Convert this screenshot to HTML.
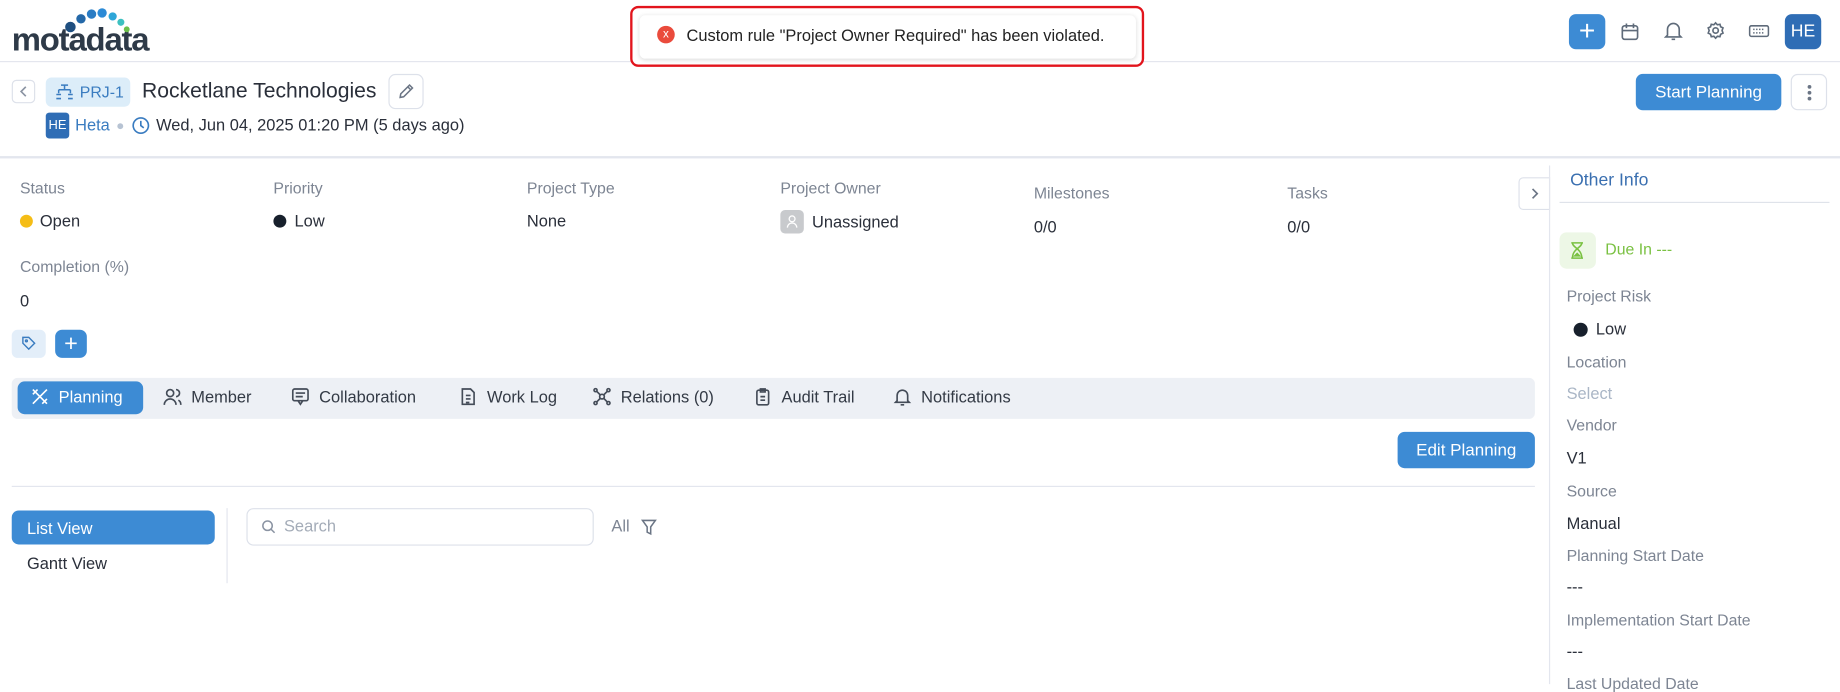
<!DOCTYPE html>
<html><head><meta charset="utf-8"><style>
*{box-sizing:border-box;margin:0;padding:0}
html,body{width:1840px;height:684px;overflow:hidden;background:#fff}
#w{position:absolute;left:0;top:0;width:1568px;height:583px;transform:scale(1.173469);transform-origin:0 0;font-family:"Liberation Sans",sans-serif;color:#2a2f3a;font-size:14px}
.a{position:absolute;white-space:nowrap}
.lb{color:#7d8593;font-size:13.5px}
.v{color:#2a2f3a;font-size:14px}
.btn{position:absolute;background:#3d8bd4;color:#fff;border-radius:6px;display:flex;align-items:center;justify-content:center;font-size:14px}
.ob{position:absolute;border:1px solid #dde1ea;border-radius:6px;background:#fff;display:flex;align-items:center;justify-content:center}
.tab{position:absolute;top:330px;display:flex;align-items:center;gap:8px;color:#333a45;font-size:14px}
svg{display:block}
</style></head><body><div id="w">
<!-- logo -->
<div class="a" style="left:10px;top:18px;font-size:28px;font-weight:bold;color:#2e3a48;letter-spacing:-1px">motadata</div>
<svg class="a" style="left:54px;top:5px" width="62" height="24"><circle cx="6" cy="18" r="4.5" fill="#1f4f80"/><circle cx="15" cy="11" r="4" fill="#2468a8"/><circle cx="24" cy="7" r="4" fill="#2a7cc4"/><circle cx="33" cy="6" r="4" fill="#2b8ad6"/><circle cx="42" cy="9" r="3.5" fill="#2ea6d8"/><circle cx="49" cy="14" r="3" fill="#3cc0c0"/><circle cx="54" cy="20" r="2.5" fill="#6cc04a"/></svg>
<div class="a" style="left:0;top:52px;width:1568px;height:1px;background:#e3e6ee"></div>
<!-- toast -->
<div class="a" style="left:537px;top:5px;width:438px;height:52px;border:2px solid #e2141c;border-radius:7px;background:#fff"></div>
<div class="a" style="left:545px;top:13px;width:423px;height:37px;background:#fff;border-radius:5px;box-shadow:0 1px 4px rgba(0,0,0,.15)"></div>
<div class="a" style="left:560px;top:22px;width:15px;height:15px;border-radius:50%;background:#ea4b3c;color:#fff;font-size:10px;line-height:15px;text-align:center">x</div>
<div class="a" style="left:585px;top:22px;font-size:14px;color:#222">Custom rule "Project Owner Required" has been violated.</div>
<!-- top right -->
<div class="btn" style="left:1337px;top:12px;width:31px;height:30px;font-size:24px;font-weight:300">+</div>
<svg class="a" style="left:1381px;top:19px" width="16" height="16" fill="none" stroke="#5f6b7a" stroke-width="1.4"><rect x="1.5" y="3" width="13" height="11.5" rx="2"/><path d="M1.5 7h13M5 1v4M11 1v4"/></svg>
<svg class="a" style="left:1418px;top:18px" width="16" height="17" fill="none" stroke="#5f6b7a" stroke-width="1.4"><path d="M3 12V7a5 5 0 0110 0v5l1.5 1.5h-13zM6.5 15.5h3"/></svg>
<svg class="a" style="left:1454px;top:18px" width="16" height="16" fill="none" stroke="#5f6b7a" stroke-width="1.4"><circle cx="8" cy="8" r="2.3"/><path d="M8 1.5l1.5 1.6 2.2-.4.6 2.1 2 1-.8 2.2.8 2.2-2 1-.6 2.1-2.2-.4L8 14.5l-1.5-1.6-2.2.4-.6-2.1-2-1L2.5 8l-.8-2.2 2-1 .6-2.1 2.2.4z"/></svg>
<svg class="a" style="left:1490px;top:21px" width="18" height="11" fill="none" stroke="#5f6b7a" stroke-width="1.3"><rect x="1" y="1" width="16" height="9" rx="1.5"/><path d="M4 4h10M4 7h10" stroke-dasharray="1.2 1.3"/></svg>
<div class="a" style="left:1521px;top:12px;width:31px;height:30px;background:#2f6db5;border-radius:6px;color:#fff;font-size:15px;line-height:30px;text-align:center">HE</div>
<!-- header row -->
<div class="ob" style="left:10px;top:68px;width:20px;height:20px;border-radius:4px"><svg width="8" height="10" fill="none" stroke="#8a93a2" stroke-width="1.4"><path d="M6 1L2 5l4 4"/></svg></div>
<div class="a" style="left:39px;top:66px;width:72px;height:25px;background:#dcedf9;border-radius:5px"></div>
<svg class="a" style="left:47px;top:71px" width="16" height="15" fill="none" stroke="#3a7cc0" stroke-width="1.3"><path d="M5 1.5h6M8 1.5v4M3 5.5h10M3 5.5v3M13 5.5v3M1 9.5h4M11 9.5h4M1 13h4M11 13h4"/></svg>
<div class="a" style="left:68px;top:71px;color:#3a7cc0;font-size:13.5px">PRJ-1</div>
<div class="a" style="left:121px;top:67px;font-size:18px;color:#2a2f3a">Rocketlane Technologies</div>
<div class="ob" style="left:331px;top:63px;width:30px;height:30px"><svg width="14" height="14" fill="none" stroke="#6b7585" stroke-width="1.3"><path d="M2 12l.5-3L10 1.5l2.5 2.5L5 11.5z M8.5 3l2.5 2.5"/></svg></div>
<div class="a" style="left:39px;top:96px;width:20px;height:22px;background:#2f6db5;border-radius:3px;color:#fff;font-size:11px;line-height:22px;text-align:center">HE</div>
<div class="a" style="left:64px;top:98px;color:#3a7cc0;font-size:14px">Heta</div>
<div class="a" style="left:100px;top:105px;width:5px;height:5px;border-radius:50%;background:#b7c3d3"></div>
<svg class="a" style="left:112px;top:99px" width="16" height="16" fill="none" stroke="#3a7cc0" stroke-width="1.4"><circle cx="8" cy="8" r="6.5"/><path d="M8 4v4l2.5 2"/></svg>
<div class="a" style="left:133px;top:98px;font-size:14px;color:#2a2f3a">Wed, Jun 04, 2025 01:20 PM (5 days ago)</div>
<div class="btn" style="left:1394px;top:63px;width:124px;height:31px;font-size:14.5px">Start Planning</div>
<div class="ob" style="left:1526px;top:63px;width:31px;height:31px"><svg width="4" height="14"><circle cx="2" cy="2" r="1.6" fill="#6b7585"/><circle cx="2" cy="7" r="1.6" fill="#6b7585"/><circle cx="2" cy="12" r="1.6" fill="#6b7585"/></svg></div>
<div class="a" style="left:0;top:133px;width:1568px;height:2px;background:#e3e6ee"></div>
<!-- fields -->
<div class="a lb" style="left:17px;top:153px">Status</div>
<div class="a" style="left:17px;top:183px;width:11px;height:11px;border-radius:50%;background:#f5bd16"></div><div class="a v" style="left:34px;top:180px">Open</div>
<div class="a lb" style="left:233px;top:153px">Priority</div>
<div class="a" style="left:233px;top:183px;width:11px;height:11px;border-radius:50%;background:#17202c"></div><div class="a v" style="left:251px;top:180px">Low</div>
<div class="a lb" style="left:449px;top:153px">Project Type</div>
<div class="a v" style="left:449px;top:180px">None</div>
<div class="a lb" style="left:665px;top:153px">Project Owner</div>
<div class="a" style="left:665px;top:179px;width:20px;height:20px;border-radius:4px;background:#c8cacd"></div>
<svg class="a" style="left:670px;top:183px" width="10" height="12" fill="none" stroke="#fff" stroke-width="1.1"><circle cx="5" cy="3.5" r="2.5"/><path d="M1 11a4 4 0 018 0"/></svg>
<div class="a v" style="left:692px;top:181px">Unassigned</div>
<div class="a lb" style="left:881px;top:157px">Milestones</div>
<div class="a v" style="left:881px;top:185px">0/0</div>
<div class="a lb" style="left:1097px;top:157px">Tasks</div>
<div class="a v" style="left:1097px;top:185px">0/0</div>
<div class="a lb" style="left:17px;top:220px">Completion (%)</div>
<div class="a v" style="left:17px;top:248px">0</div>
<div class="a" style="left:10px;top:281px;width:29px;height:24px;background:#e3eef9;border-radius:5px"></div>
<svg class="a" style="left:18px;top:286px" width="13" height="13" fill="none" stroke="#3a7cc0" stroke-width="1.2"><path d="M1.5 1.5h5l5 5-5 5-5-5z"/><circle cx="4.5" cy="4.5" r="0.8"/></svg>
<div class="btn" style="left:47px;top:281px;width:27px;height:24px;font-size:20px;font-weight:300">+</div>
<!-- tabs -->
<div class="a" style="left:10px;top:322px;width:1298px;height:35px;background:#edf0f5;border-radius:5px"></div>
<div class="btn" style="left:15px;top:325px;width:107px;height:28px"></div>
<div class="tab" style="left:26px;color:#fff"><svg width="16" height="16" fill="none" stroke="#fff" stroke-width="1.4"><path d="M2 2l12 12M14 2L2 14M2 6l4-4M10 14l4-4"/></svg>Planning</div>
<div class="tab" style="left:139px"><svg width="16" height="16" fill="none" stroke="#444c58" stroke-width="1.4"><circle cx="6" cy="5" r="3"/><path d="M1 15a5 5 0 0110 0M11 2a3 3 0 010 6M13 11a4 4 0 012 4"/></svg>Member</div>
<div class="tab" style="left:248px"><svg width="16" height="16" fill="none" stroke="#444c58" stroke-width="1.4"><rect x="1.5" y="1.5" width="13" height="10" rx="1.5"/><path d="M4 5h8M4 8h6M6 11.5L8 14.5l2-3"/></svg>Collaboration</div>
<div class="tab" style="left:391px"><svg width="16" height="16" fill="none" stroke="#444c58" stroke-width="1.4"><path d="M3 1.5h7l3 3v10H3z M6 7h4M6 10h4M6 13h3"/></svg>Work Log</div>
<div class="tab" style="left:505px"><svg width="16" height="16" fill="none" stroke="#444c58" stroke-width="1.4"><circle cx="8" cy="8" r="2"/><circle cx="2.5" cy="2.5" r="1.3"/><circle cx="13.5" cy="2.5" r="1.3"/><circle cx="2.5" cy="13.5" r="1.3"/><circle cx="13.5" cy="13.5" r="1.3"/><path d="M3.5 3.5l3 3M12.5 3.5l-3 3M3.5 12.5l3-3M12.5 12.5l-3-3"/></svg>Relations (0)</div>
<div class="tab" style="left:642px"><svg width="16" height="16" fill="none" stroke="#444c58" stroke-width="1.4"><rect x="3" y="2.5" width="10" height="12.5" rx="1.5"/><path d="M6 1.5h4v2.5H6zM6 8h4M6 11h4"/></svg>Audit Trail</div>
<div class="tab" style="left:761px"><svg width="16" height="16" fill="none" stroke="#444c58" stroke-width="1.4"><path d="M3.5 11.5V7a4.5 4.5 0 019 0v4.5l1.3 1.3H2.2zM6.5 15h3"/></svg>Notifications</div>
<div class="btn" style="left:1191px;top:368px;width:117px;height:31px;font-size:14.5px">Edit Planning</div>
<div class="a" style="left:10px;top:414px;width:1298px;height:1px;background:#e3e6ee"></div>
<!-- list/gantt -->
<div class="btn" style="left:10px;top:435px;width:173px;height:29px;justify-content:flex-start;padding-left:13px">List View</div>
<div class="a v" style="left:23px;top:472px">Gantt View</div>
<div class="a" style="left:193px;top:433px;width:1px;height:64px;background:#e3e6ee"></div>
<div class="a" style="left:210px;top:433px;width:296px;height:32px;border:1px solid #dde1ea;border-radius:6px"></div>
<svg class="a" style="left:223px;top:443px" width="12" height="12" fill="none" stroke="#8a93a2" stroke-width="1.3"><circle cx="5" cy="5" r="4"/><path d="M8 8l3 3"/></svg>
<div class="a" style="left:242px;top:440px;color:#a4acb8;font-size:14px">Search</div>
<div class="a" style="left:521px;top:440px;color:#7d8593;font-size:14px">All</div>
<svg class="a" style="left:546px;top:442px" width="14" height="15" fill="none" stroke="#6b7585" stroke-width="1.3"><path d="M1.5 1.5h11L8.5 7v6l-3-1.5V7z"/></svg>
<!-- right panel -->
<div class="ob" style="left:1294px;top:151px;width:27px;height:28px;border-radius:4px 0 0 4px"><svg width="8" height="10" fill="none" stroke="#6b7585" stroke-width="1.4"><path d="M2 1l4 4-4 4"/></svg></div>
<div class="a" style="left:1320px;top:141px;width:1px;height:442px;background:#e3e6ee"></div>
<div class="a" style="left:1338px;top:145px;color:#3a6fb0;font-size:15px">Other Info</div>
<div class="a" style="left:1329px;top:172px;width:230px;height:1px;background:#dfe3ea"></div>
<div class="a" style="left:1329px;top:198px;width:31px;height:31px;background:#edf7e6;border-radius:6px"></div>
<svg class="a" style="left:1338px;top:206px" width="12" height="15" fill="none" stroke="#7ac142" stroke-width="1.3"><path d="M1 1h10M1 14h10M2 1c0 4 8 5 8 13M10 1c0 4-8 5-8 13"/><path d="M4 12h4l-2-2z" fill="#7ac142"/></svg>
<div class="a" style="left:1368px;top:205px;color:#7ac142;font-size:13.5px">Due In ---</div>
<div class="a lb" style="left:1335px;top:245px">Project Risk</div>
<div class="a" style="left:1341px;top:275px;width:12px;height:12px;border-radius:50%;background:#17202c"></div><div class="a v" style="left:1360px;top:272px">Low</div>
<div class="a lb" style="left:1335px;top:301px">Location</div>
<div class="a" style="left:1335px;top:327px;color:#aab6c6;font-size:14px">Select</div>
<div class="a lb" style="left:1335px;top:355px">Vendor</div>
<div class="a v" style="left:1335px;top:382px">V1</div>
<div class="a lb" style="left:1335px;top:411px">Source</div>
<div class="a v" style="left:1335px;top:438px">Manual</div>
<div class="a lb" style="left:1335px;top:466px">Planning Start Date</div>
<div class="a v" style="left:1335px;top:492px">---</div>
<div class="a lb" style="left:1335px;top:521px">Implementation Start Date</div>
<div class="a v" style="left:1335px;top:547px">---</div>
<div class="a lb" style="left:1335px;top:575px">Last Updated Date</div>
</div></body></html>
